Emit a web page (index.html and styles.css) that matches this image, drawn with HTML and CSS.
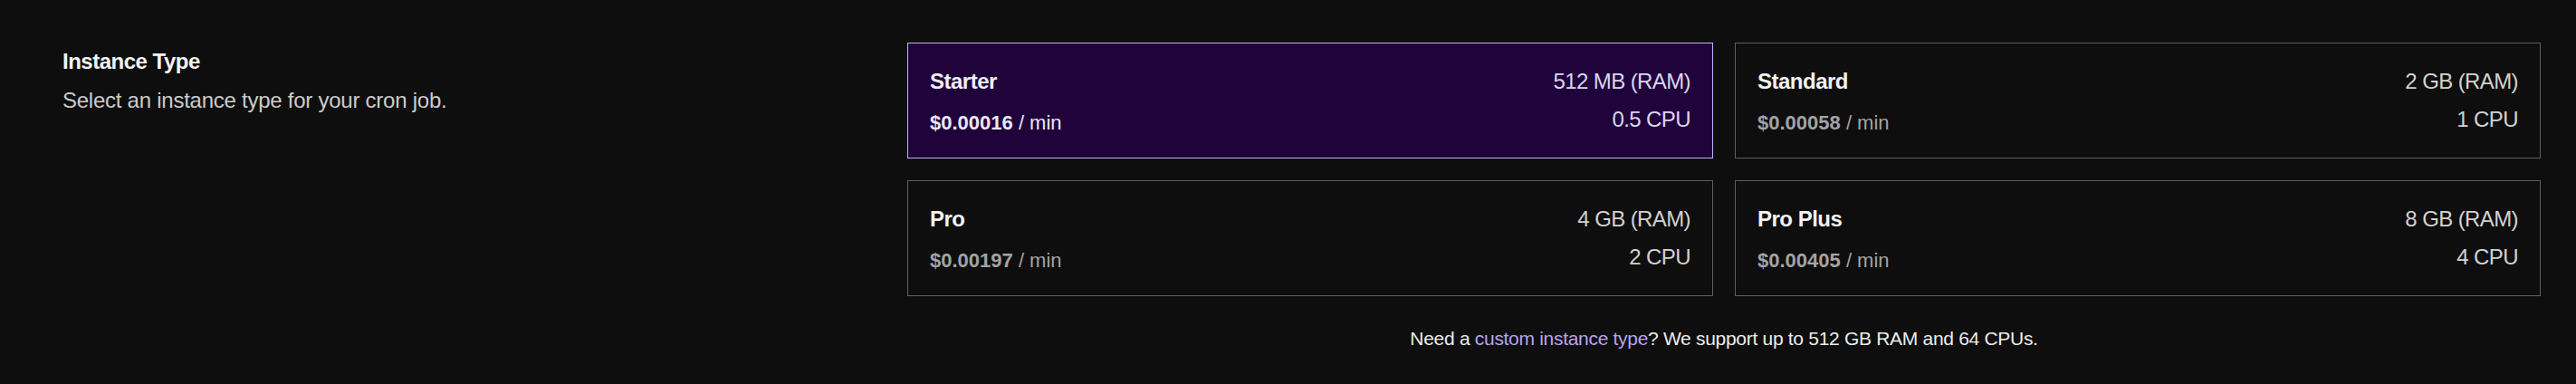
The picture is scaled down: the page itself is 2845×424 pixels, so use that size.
FILE: index.html
```html
<!DOCTYPE html>
<html lang="en">
<head>
<meta charset="utf-8">
<title>Instance Type</title>
<link rel="stylesheet" href="styles.css">
</head>
<body>
<section class="section">
  <div class="intro">
    <h2 class="intro-title">Instance Type</h2>
    <p class="intro-desc">Select an instance type for your cron job.</p>
  </div>
  <div class="picker">
    <div class="grid">
      <div class="card card-selected">
        <div class="card-left">
          <div class="card-name">Starter</div>
          <div class="card-price"><strong>$0.00016</strong> / min</div>
        </div>
        <div class="card-right">
          <div>512 MB (RAM)</div>
          <div>0.5 CPU</div>
        </div>
      </div>
      <div class="card">
        <div class="card-left">
          <div class="card-name">Standard</div>
          <div class="card-price"><strong>$0.00058</strong> / min</div>
        </div>
        <div class="card-right">
          <div>2 GB (RAM)</div>
          <div>1 CPU</div>
        </div>
      </div>
      <div class="card">
        <div class="card-left">
          <div class="card-name">Pro</div>
          <div class="card-price"><strong>$0.00197</strong> / min</div>
        </div>
        <div class="card-right">
          <div>4 GB (RAM)</div>
          <div>2 CPU</div>
        </div>
      </div>
      <div class="card">
        <div class="card-left">
          <div class="card-name">Pro Plus</div>
          <div class="card-price"><strong>$0.00405</strong> / min</div>
        </div>
        <div class="card-right">
          <div>8 GB (RAM)</div>
          <div>4 CPU</div>
        </div>
      </div>
    </div>
    <p class="note">Need a <a class="note-link" href="#">custom instance type</a>? We support up to 512 GB RAM and 64 CPUs.</p>
  </div>
</section>
</body>
</html>
```
FILE: styles.css
```css
html, body {
  margin: 0;
  padding: 0;
  background: #0e0e0e;
  height: 100%;
}
body {
  font-family: "Liberation Sans", Arial, sans-serif;
  color: #ffffff;
}
.section {
  display: flex;
  padding: 47px 39px 0 69px;
}
.intro {
  flex: 1;
  padding-top: 5px;
}
.intro-title {
  margin: 0;
  font-size: 24px;
  line-height: 32px;
  font-weight: 700;
  letter-spacing: -0.5px;
  color: #f4f4f4;
}
.intro-desc {
  margin: 11px 0 0;
  font-size: 24px;
  line-height: 32px;
  letter-spacing: -0.25px;
  color: #cccccc;
}
.picker {
  width: 1804px;
  display: flex;
  flex-direction: column;
}
.grid {
  display: grid;
  grid-template-columns: 1fr 1fr;
  gap: 24px;
}
.card {
  height: 128px;
  box-sizing: border-box;
  border: 1px solid #5e5e5e;
  padding: 26px 24px 22px;
  display: flex;
  justify-content: space-between;
  color: #d2d2d2;
}
.card-selected {
  background: #1f033a;
  border-color: #c3b1f3;
  color: #ddd4f2;
}
.card-left, .card-right {
  display: flex;
  flex-direction: column;
  gap: 14px;
}
.card-right {
  align-items: flex-end;
  font-size: 24px;
  line-height: 32px;
  letter-spacing: -0.6px;
  gap: 10px;
}
.card-name {
  font-size: 24px;
  line-height: 32px;
  font-weight: 700;
  letter-spacing: -0.5px;
  color: #f2f2f2;
}
.card-price {
  font-size: 22px;
  line-height: 32px;
  color: #a3a3a3;
}
.card-price strong {
  font-weight: 700;
}
.card-selected .card-name {
  color: #f2eefb;
}
.card-selected .card-price {
  color: #ece6fa;
}
.note {
  margin: 31px 0 0;
  text-align: center;
  font-size: 21px;
  line-height: 32px;
  letter-spacing: -0.3px;
  color: #ececec;
}
.note-link {
  color: #b8a4ec;
  text-decoration: none;
}
```
